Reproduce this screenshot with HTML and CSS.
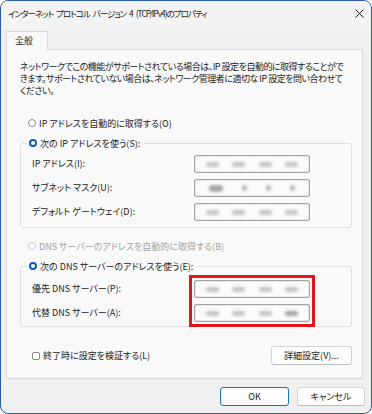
FILE: index.html
```html
<!DOCTYPE html>
<html lang="ja">
<head>
  <meta charset="UTF-8">
  <title>インターネット プロトコル バージョン 4 (TCP/IPv4)のプロパティ</title>
  <link rel="stylesheet" href="styles.css">
</head>
<body>
  <div class="window">
    <div class="titlebar">
      <span class="title">インターネット プロトコル バージョン 4 (TCP/IPv4)のプロパティ</span>
      <svg class="close" width="9" height="9" viewBox="0 0 9 9">
        <path d="M0.5 0.5 L8.5 8.5 M8.5 0.5 L0.5 8.5" stroke="#1b1b1b" stroke-width="1" fill="none"/>
      </svg>
    </div>

    <div class="tabs">
      <div class="tab">全般</div>
    </div>

    <div class="panel">
      <p class="desc">ネットワークでこの機能がサポートされている場合は、IP 設定を自動的に取得することがで<br>きます。サポートされていない場合は、ネットワーク管理者に適切な IP 設定を問い合わせて<br>ください。</p>

      <div class="opt"><span class="radio"></span>IP アドレスを自動的に取得する(O)</div>

      <fieldset class="group group-ip">
        <legend><span class="radio on"></span>次の IP アドレスを使う(S):</legend>
        <div class="fields">
          <div class="labels">
            <span>IP アドレス(I):</span>
            <span>サブネット マスク(U):</span>
            <span>デフォルト ゲートウェイ(D):</span>
          </div>
          <div class="inputs">
            <div class="ipbox"><i></i><i></i><i></i><i></i></div>
            <div class="ipbox mask"><i class="wide"></i><i class="dot"></i><i class="dot"></i><i class="dot"></i></div>
            <div class="ipbox"><i></i><i></i><i></i><i></i></div>
          </div>
        </div>
      </fieldset>

      <div class="opt disabled"><span class="radio"></span>DNS サーバーのアドレスを自動的に取得する(B)</div>

      <fieldset class="group group-dns">
        <legend><span class="radio on"></span>次の DNS サーバーのアドレスを使う(E):</legend>
        <div class="fields">
          <div class="labels">
            <span>優先 DNS サーバー(P):</span>
            <span>代替 DNS サーバー(A):</span>
          </div>
          <div class="inputs marked">
            <div class="ipbox"><i></i><i></i><i></i><i></i></div>
            <div class="ipbox"><i></i><i></i><i></i><i class="dark"></i></div>
          </div>
        </div>
      </fieldset>

      <div class="footer-row">
        <div class="check"><span class="box"></span>終了時に設定を検証する(L)</div>
        <button class="btn btn-adv">詳細設定(V)...</button>
      </div>
    </div>

    <div class="actions">
      <button class="btn btn-ok">OK</button>
      <button class="btn btn-cancel">キャンセル</button>
    </div>
  </div>
</body>
</html>
```

FILE: styles.css
```css
html, body {
  margin: 0;
  padding: 0;
  background-color: #ffffff;
}

body {
  font-family: "Noto Sans CJK JP", "Noto Sans", sans-serif;
  font-size: 9px;
  font-feature-settings: "palt";
  color: #1b1b1b;
}

.window {
  width: 372px;
  height: 414px;
  box-sizing: border-box;
  border: 1px solid #2a5da6;
  border-radius: 8px;
  background-color: #f0f0f0;
  overflow: hidden;
}

.titlebar {
  height: 30px;
  box-sizing: border-box;
  padding: 5px 7px 0 7px;
  display: flex;
  justify-content: space-between;
  align-items: flex-start;
  background-color: #f3f3f3;
}
.title {
  line-height: 14px;
  font-size: 8.5px;
  letter-spacing: -1px;
  word-spacing: 2px;
}
.close {
  margin-top: 3px;
}

.tabs {
  display: flex;
  padding-left: 5px;
}
.tab {
  position: relative;
  width: 42px;
  height: 19px;
  box-sizing: border-box;
  margin-bottom: -1px;
  padding-left: 8px;
  line-height: 18px;
  background-color: #f9f9f9;
  border: 1px solid #d9d9d9;
  border-bottom: none;
}

.panel {
  margin: 0 8px 0 5px;
  height: 330px;
  box-sizing: border-box;
  padding: 11px 10px 0 13px;
  background-color: #f9f9f9;
  border: 1px solid #d9d9d9;
}

.desc {
  margin: 0 0 19px 0;
  line-height: 12px;
  letter-spacing: -0.5px;
  white-space: nowrap;
}

.opt {
  display: flex;
  align-items: center;
  height: 14px;
  padding-left: 8px;
}
.opt.disabled {
  color: #a3a3a3;
  margin-top: 11px;
}

.radio {
  width: 8px;
  height: 8px;
  box-sizing: border-box;
  border: 1px solid #8a8a8a;
  border-radius: 50%;
  background-color: #fcfcfc;
  margin-right: 3px;
  flex: none;
}
.radio.on {
  border: 2.5px solid #0f5cb5;
  background-color: #ffffff;
}
.opt.disabled .radio {
  border-color: #c8c8c8;
}

.group {
  margin: 6px 0 0 0;
  padding: 0 0 6px 11px;
  border: 1px solid #dedede;
  border-radius: 3px;
}
.group legend {
  display: flex;
  align-items: center;
  height: 14px;
  margin-left: -5px;
  padding: 0 4px 0 2px;
}
.group-dns {
  padding-bottom: 4px;
}

.fields {
  display: flex;
  margin-top: 5px;
}
.group-dns .fields {
  margin-top: 7px;
}
.labels {
  width: 162px;
  display: flex;
  flex-direction: column;
  gap: 6px;
}
.labels span {
  height: 18px;
  line-height: 18px;
}
.inputs {
  display: flex;
  flex-direction: column;
  gap: 6px;
}
.inputs.marked {
  outline: 3px solid #e3141e;
  outline-offset: 2px;
}

.ipbox {
  width: 116px;
  height: 18px;
  box-sizing: border-box;
  border: 1px solid #a3a3a3;
  border-radius: 2px;
  box-shadow: inset 0 0 0 1px #e8e8e8;
  background-color: #fbfbfb;
  display: flex;
  align-items: center;
  justify-content: space-around;
  padding: 0 4px;
}
.ipbox i {
  width: 13px;
  height: 5px;
  border-radius: 3px;
  background-color: #c4c4c4;
  filter: blur(1.4px);
}
.ipbox i.wide {
  width: 14px;
  height: 7px;
  background-color: #a9a9a9;
}
.ipbox i.dot {
  width: 5px;
  height: 6px;
  background-color: #b4b4b4;
}
.ipbox i.dark {
  background-color: #a5a5a5;
}

.footer-row {
  display: flex;
  justify-content: space-between;
  align-items: center;
  margin-top: 19px;
  padding-left: 12px;
}
.check {
  display: flex;
  align-items: center;
}
.check .box {
  width: 8px;
  height: 8px;
  box-sizing: border-box;
  border: 1px solid #8a8a8a;
  border-radius: 2px;
  background-color: #fcfcfc;
  margin-right: 3px;
}

.btn {
  height: 19px;
  box-sizing: border-box;
  padding: 0;
  font-family: inherit;
  font-size: 9px;
  font-feature-settings: "palt";
  color: #1b1b1b;
  background-color: #fdfdfd;
  border: 1px solid #d3d3d3;
  border-bottom-color: #bdbdbd;
  border-radius: 3px;
}
.btn-adv {
  width: 81px;
}

.actions {
  display: flex;
  justify-content: flex-end;
  gap: 8px;
  padding: 8px 6px 0 0;
}
.btn-ok {
  width: 69px;
  border: 1px solid #1f6fc4;
}
.btn-cancel {
  width: 68px;
}
```
